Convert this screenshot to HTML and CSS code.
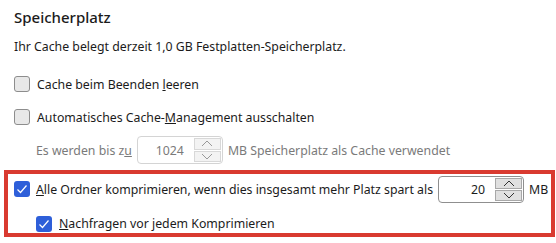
FILE: index.html
```html
<!DOCTYPE html>
<html lang="de">
<head>
    <meta charset="UTF-8">
    <title>Speicherplatz</title>
    <link rel="stylesheet" href="styles.css">
</head>
<body>
    <div class="panel">
        <h2 class="title">Speicherplatz</h2>
        <p class="info">Ihr Cache belegt derzeit 1,0 GB Festplatten-Speicherplatz.</p>

        <label class="row row-first">
            <span class="box"></span>
            <span>Cache beim Beenden <u>l</u>eeren</span>
        </label>
        <label class="row">
            <span class="box"></span>
            <span>Automatisches Cache-<u>M</u>anagement ausschalten</span>
        </label>

        <div class="row row-indent disabled">
            <span>Es werden bis z<u>u</u></span>
            <div class="spin spin-disabled">
                <span class="spin-value">1024</span>
                <div class="spin-buttons">
                    <span class="spin-btn">
                        <svg width="12" height="7" viewBox="0 0 12 7"><polyline points="1,6 6,1 11,6" fill="none" stroke="currentColor" stroke-width="1"/></svg>
                    </span>
                    <span class="spin-btn">
                        <svg width="12" height="7" viewBox="0 0 12 7"><polyline points="1,1 6,6 11,1" fill="none" stroke="currentColor" stroke-width="1"/></svg>
                    </span>
                </div>
            </div>
            <span>MB Speicherplatz als Cache verwendet</span>
        </div>

        <div class="highlight">
            <div class="row row-compact">
                <span class="box checked">
                    <svg width="16" height="16" viewBox="0 0 16 16"><polyline points="3.5,8.5 6.5,11.5 12.5,4.5" fill="none" stroke="#fff" stroke-width="1.2"/></svg>
                </span>
                <span><u>A</u>lle Ordner komprimieren, wenn dies insgesamt mehr Platz spart als</span>
                <div class="spin">
                    <span class="spin-value">20</span>
                    <div class="spin-buttons">
                        <span class="spin-btn">
                            <svg width="12" height="7" viewBox="0 0 12 7"><polyline points="1,6 6,1 11,6" fill="none" stroke="currentColor" stroke-width="1"/></svg>
                        </span>
                        <span class="spin-btn">
                            <svg width="12" height="7" viewBox="0 0 12 7"><polyline points="1,1 6,6 11,1" fill="none" stroke="currentColor" stroke-width="1"/></svg>
                        </span>
                    </div>
                </div>
                <span>MB</span>
            </div>
            <div class="row row-sub">
                <span class="box checked">
                    <svg width="16" height="16" viewBox="0 0 16 16"><polyline points="3.5,8.5 6.5,11.5 12.5,4.5" fill="none" stroke="#fff" stroke-width="1.2"/></svg>
                </span>
                <span><u>N</u>achfragen vor jedem Komprimieren</span>
            </div>
        </div>
    </div>
</body>
</html>
```

FILE: styles.css
```css
* {
    margin: 0;
    padding: 0;
    box-sizing: border-box;
}

body {
    background: #fff;
    color: #1b1b1b;
    font-family: 'Noto Sans', sans-serif;
    font-size: 12.3px;
    white-space: nowrap;
}

.panel {
    width: 556px;
    height: 243px;
}

.title {
    font-size: 15px;
    font-weight: 500;
    height: 34px;
    line-height: 34px;
    padding-left: 14px;
}

.info {
    height: 26px;
    line-height: 26px;
    padding-left: 14px;
}

.row {
    display: flex;
    align-items: center;
    gap: 6px;
    height: 32px;
    padding-left: 14px;
    margin-top: 1px;
}

.row-first {
    margin-top: 8px;
}

.row-indent {
    padding-left: 36px;
    gap: 4px;
}

.disabled {
    color: #7a7a7a;
}

.box {
    width: 16px;
    height: 16px;
    flex-shrink: 0;
    border: 1px solid #8d8d8d;
    border-radius: 3px;
    background: #e8e8e8;
    margin-right: 1px;
}

.box.checked {
    border: none;
    background: #2e5fd9;
}

.box svg {
    display: block;
}

/* number spinner */
.spin {
    width: 86px;
    height: 27px;
    flex-shrink: 0;
    border: 1px solid #8f8f8f;
    border-radius: 4px;
    display: flex;
    align-items: center;
    padding: 1px;
    margin: 0 1px;
}

.spin-value {
    flex: 1;
    text-align: right;
    padding-right: 10px;
}

.spin-buttons {
    width: 27px;
    display: flex;
    flex-direction: column;
    gap: 1px;
    height: 100%;
}

.spin-btn {
    flex: 1;
    display: flex;
    align-items: center;
    justify-content: center;
    background: #e0e0e0;
    border: 1px solid #a8a8a8;
    color: #333;
}

.spin-disabled {
    height: 28px;
    border-color: #d4d4d4;
}

.spin-disabled .spin-btn {
    background: #f3f3f3;
    border-color: #d8d8d8;
    color: #999;
}

.highlight {
    margin: 4px 1px 0 4px;
    border: 4px solid #d93a30;
    height: 67px;
}

.highlight .row {
    padding-left: 6px;
    margin-top: 0;
}

.row-compact {
    height: 30px;
    gap: 4px;
}

.row-compact .box {
    margin-right: 2px;
}

.row-sub {
    height: auto;
    padding: 11px 0 2px 28px !important;
}
```
